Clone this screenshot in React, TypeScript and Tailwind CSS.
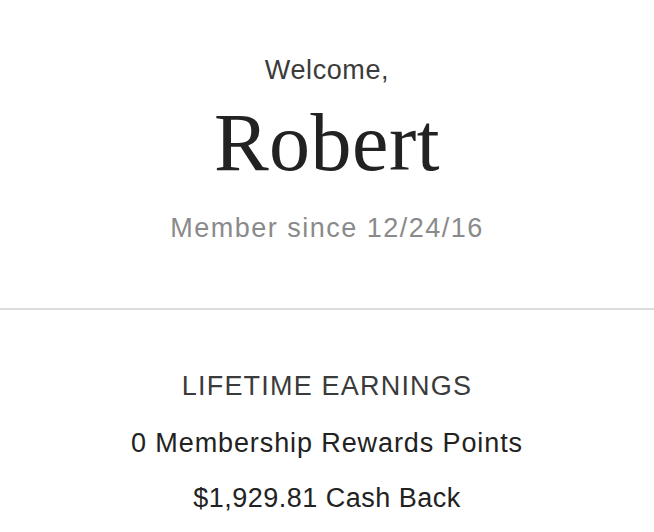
import React from "react";

export default function App() {
  return (
    <div className="w-[654px] h-[532px] bg-white overflow-hidden font-['Liberation_Sans',Arial,sans-serif]">
      {/* Greeting */}
      <div className="flex flex-col items-center pt-[54px]">
        <p className="text-[27px] leading-[32px] tracking-[0.6px] text-[#3b3b3b]">Welcome,</p>
        <h1 className="mt-[17px] text-[82px] leading-[80px] tracking-[0.5px] text-[#222] font-['Liberation_Serif',serif]">Robert</h1>
        <p className="mt-[29px] text-[27px] leading-[32px] tracking-[1.5px] text-[#8a8a8a]">Member since 12/24/16</p>
      </div>

      <div className="mt-[64px] h-[2px] bg-[#dcdcdc]" />

      {/* Lifetime earnings */}
      <div className="flex flex-col items-center pt-[60px]">
        <h2 className="text-[27px] leading-[32px] tracking-[1.2px] text-[#3b3b3b] uppercase">Lifetime Earnings</h2>
        <p className="mt-[25px] text-[27px] leading-[32px] tracking-[0.9px] text-[#222]">0 Membership Rewards Points</p>
        <p className="mt-[23px] text-[27px] leading-[32px] tracking-[0.5px] text-[#222]">$1,929.81 Cash Back</p>
      </div>
    </div>
  );
}
